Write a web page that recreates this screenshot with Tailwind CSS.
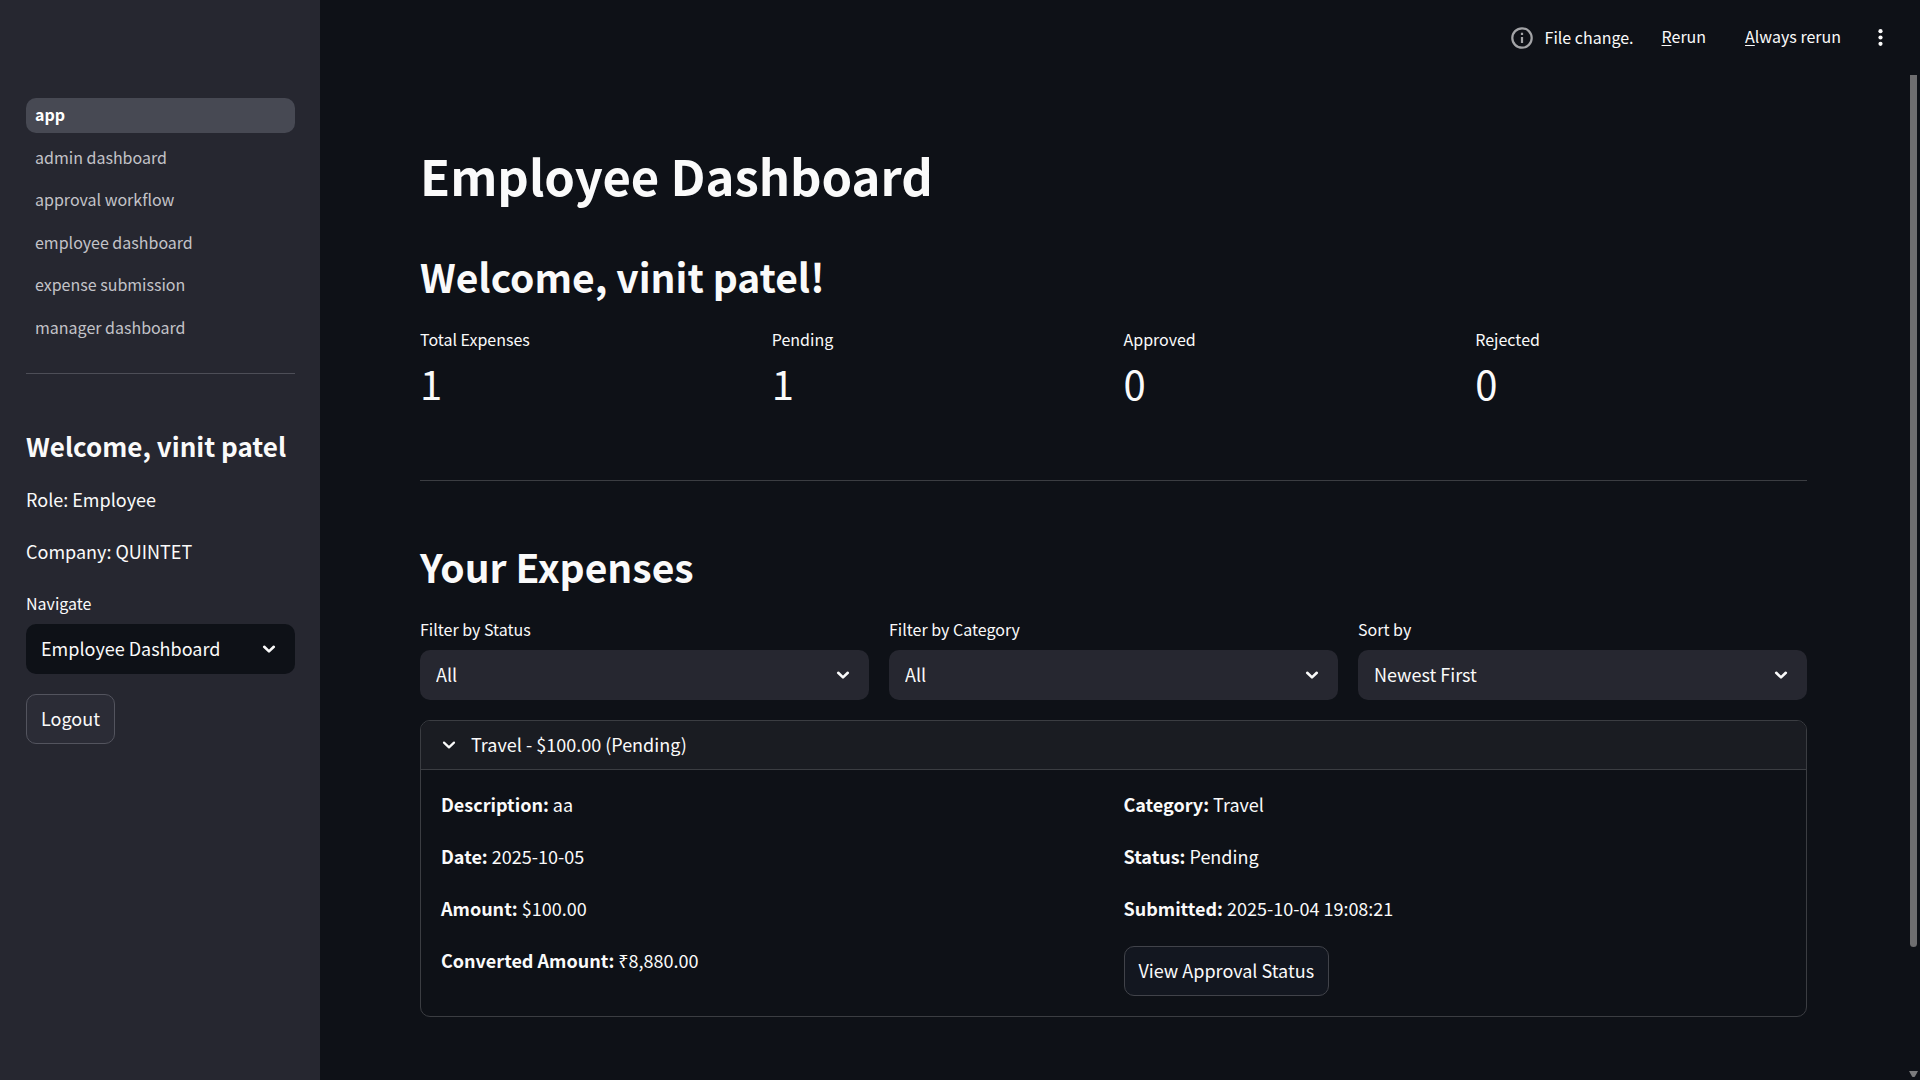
<!DOCTYPE html>
<html lang="en">
<head>
<meta charset="utf-8">
<meta name="viewport" content="width=device-width, initial-scale=1">
<title>Employee Dashboard</title>
<script src="https://cdn.jsdelivr.net/npm/@tailwindcss/browser@4"></script>
</head>
<body class="flex min-h-screen bg-[#0e1117] font-['Noto_Sans_CJK_SC','Noto_Sans',sans-serif] text-[18px] leading-8 text-[#fafafa]">

<!-- Sidebar -->
<aside class="w-80 shrink-0 bg-[#262730] pt-[98px] pr-[25px] pl-[26px]">
  <nav class="flex h-[248px] flex-col justify-between text-base text-[#c3c3c8]">
    <a href="#" class="flex h-[35px] items-center rounded-[10px] bg-[#474953] px-[9px] pb-[3px] font-bold text-white">app</a>
    <a href="#" class="flex h-[35px] items-center rounded-[10px] px-[9px] pb-[3px]">admin dashboard</a>
    <a href="#" class="flex h-[35px] items-center rounded-[10px] px-[9px] pb-[3px]">approval workflow</a>
    <a href="#" class="flex h-[35px] items-center rounded-[10px] px-[9px] pb-[3px]">employee dashboard</a>
    <a href="#" class="flex h-[35px] items-center rounded-[10px] px-[9px] pb-[3px]">expense submission</a>
    <a href="#" class="flex h-[35px] items-center rounded-[10px] px-[9px] pb-[3px]">manager dashboard</a>
  </nav>
  <hr class="mt-[27px] border-[#4d4e57]">
  <h2 class="mt-[54px] text-[26px] leading-9 font-bold whitespace-nowrap">Welcome, vinit patel</h2>
  <p class="mt-[19px]">Role: Employee</p>
  <p class="mt-5">Company: QUINTET</p>
  <label for="navigate" class="mt-6 block text-base leading-6">Navigate</label>
  <div class="relative mt-[9px]">
    <select id="navigate" class="h-[50px] w-full appearance-none rounded-[10px] bg-[#0e1117] px-[15px] pb-[2px]">
      <option>Employee Dashboard</option>
    </select>
    <svg class="pointer-events-none absolute top-[15px] right-4 size-5" viewBox="0 0 20 20" fill="none" stroke="currentColor" stroke-width="2.6" stroke-linecap="round" stroke-linejoin="round"><path d="M5.2 7.8 10 12.4l4.800-4.600"/></svg>
  </div>
  <button type="button" class="mt-5 h-[50px] rounded-[10px] border border-[#53545e] bg-[#2b2c36] px-[14px] pb-[2px]">Logout</button>
</aside>

<div class="flex min-w-0 flex-1 flex-col">
  <!-- Toolbar -->
  <header class="flex h-[75px] items-center justify-end pr-[27px] text-base">
    <svg class="size-[22px] text-[#a3a4a7]" viewBox="0 0 22 22" fill="none" stroke="currentColor" stroke-width="2.200"><circle cx="11" cy="11" r="9.700"/><path d="M11 10v6M11 5.700v2.300"/></svg>
    <span class="ml-3 pb-[2px]">File change.</span>
    <button type="button" class="ml-7 pb-[3px]"><span class="underline underline-offset-2">R</span>erun</button>
    <button type="button" class="ml-[39px] pb-[3px]"><span class="underline underline-offset-2">A</span>lways rerun</button>
    <button type="button" aria-label="Main menu" class="ml-[27px]">
      <svg class="size-[25px]" viewBox="0 0 25 25" fill="currentColor"><circle cx="12.500" cy="6.200" r="2.100"/><circle cx="12.500" cy="12.500" r="2.100"/><circle cx="12.500" cy="18.800" r="2.100"/></svg>
    </button>
  </header>

  <div class="flex flex-1">
    <main class="min-w-0 flex-1 pt-[67px] pr-[103px] pb-[63px] pl-[100px]">
      <h1 class="text-[49px] leading-[66px] font-bold">Employee Dashboard</h1>
      <h2 class="mt-[41px] text-[39px] leading-[54px] font-bold">Welcome, vinit patel!</h2>

      <dl class="mt-6 grid grid-cols-4 gap-5">
        <div><dt class="text-base leading-6">Total Expenses</dt><dd class="mt-[3px] text-[40px] leading-[58px]">1</dd></div>
        <div><dt class="text-base leading-6">Pending</dt><dd class="mt-[3px] text-[40px] leading-[58px]">1</dd></div>
        <div><dt class="text-base leading-6">Approved</dt><dd class="mt-[3px] text-[40px] leading-[58px]">0</dd></div>
        <div><dt class="text-base leading-6">Rejected</dt><dd class="mt-[3px] text-[40px] leading-[58px]">0</dd></div>
      </dl>

      <hr class="mt-[68px] border-[#3b3d42]">

      <h2 class="mt-[58px] text-[39px] leading-[54px] font-bold">Your Expenses</h2>

      <div class="mt-6 grid grid-cols-3 gap-5">
        <div>
          <label for="status" class="block text-base leading-6">Filter by Status</label>
          <div class="relative mt-[9px]">
            <select id="status" class="h-[50px] w-full appearance-none rounded-[10px] bg-[#262730] px-4 pb-[2px]"><option>All</option></select>
            <svg class="pointer-events-none absolute top-[15px] right-4 size-5" viewBox="0 0 20 20" fill="none" stroke="currentColor" stroke-width="2.6" stroke-linecap="round" stroke-linejoin="round"><path d="M5.2 7.8 10 12.4l4.800-4.600"/></svg>
          </div>
        </div>
        <div>
          <label for="category" class="block text-base leading-6">Filter by Category</label>
          <div class="relative mt-[9px]">
            <select id="category" class="h-[50px] w-full appearance-none rounded-[10px] bg-[#262730] px-4 pb-[2px]"><option>All</option></select>
            <svg class="pointer-events-none absolute top-[15px] right-4 size-5" viewBox="0 0 20 20" fill="none" stroke="currentColor" stroke-width="2.6" stroke-linecap="round" stroke-linejoin="round"><path d="M5.2 7.8 10 12.4l4.800-4.600"/></svg>
          </div>
        </div>
        <div>
          <label for="sort" class="block text-base leading-6">Sort by</label>
          <div class="relative mt-[9px]">
            <select id="sort" class="h-[50px] w-full appearance-none rounded-[10px] bg-[#262730] px-4 pb-[2px]"><option>Newest First</option></select>
            <svg class="pointer-events-none absolute top-[15px] right-4 size-5" viewBox="0 0 20 20" fill="none" stroke="currentColor" stroke-width="2.6" stroke-linecap="round" stroke-linejoin="round"><path d="M5.2 7.8 10 12.4l4.800-4.600"/></svg>
          </div>
        </div>
      </div>

      <details open class="mt-5 overflow-hidden rounded-[10px] border border-[#3b3d42]">
        <summary class="flex h-[49px] cursor-pointer list-none items-center gap-3 border-b border-[#3b3d42] bg-[#1a1c22] px-[18px]">
          <svg class="size-5" viewBox="0 0 20 20" fill="none" stroke="currentColor" stroke-width="2.200" stroke-linecap="round" stroke-linejoin="round"><path d="M5 7.600 10 12.400l5-4.800"/></svg>
          <span class="pb-[2px]">Travel - $100.00 (Pending)</span>
        </summary>
        <div class="grid grid-cols-2 gap-5 px-5 pt-[18px] pb-5">
          <div class="flex flex-col gap-5">
            <p><strong>Description:</strong> aa</p>
            <p><strong>Date:</strong> 2025-10-05</p>
            <p><strong>Amount:</strong> $100.00</p>
            <p><strong>Converted Amount:</strong> ₹8,880.00</p>
          </div>
          <div>
            <div class="flex flex-col gap-5">
              <p><strong>Category:</strong> Travel</p>
              <p><strong>Status:</strong> Pending</p>
              <p><strong>Submitted:</strong> 2025-10-04 19:08:21</p>
            </div>
            <button type="button" class="mt-[22px] h-[50px] rounded-[10px] border border-[#41434a] bg-[#131720] px-[14px] pb-[2px]">View Approval Status</button>
          </div>
        </div>
      </details>
    </main>

    <!-- Scroll track -->
    <div class="flex w-[10px] shrink-0 flex-col items-center justify-between pr-[3px] pb-[3px]" aria-hidden="true">
      <div class="h-[872px] w-[7px] rounded-b-full bg-[#6e6e70]"></div>
      <svg class="h-[6px] w-[9px] shrink-0 text-[#7b7b7d]" viewBox="0 0 9 6" fill="currentColor"><path d="M0 0h9L6 5.500Q4.500 6.500 3 5.500Z"/></svg>
    </div>
  </div>
</div>
</body>
</html>
